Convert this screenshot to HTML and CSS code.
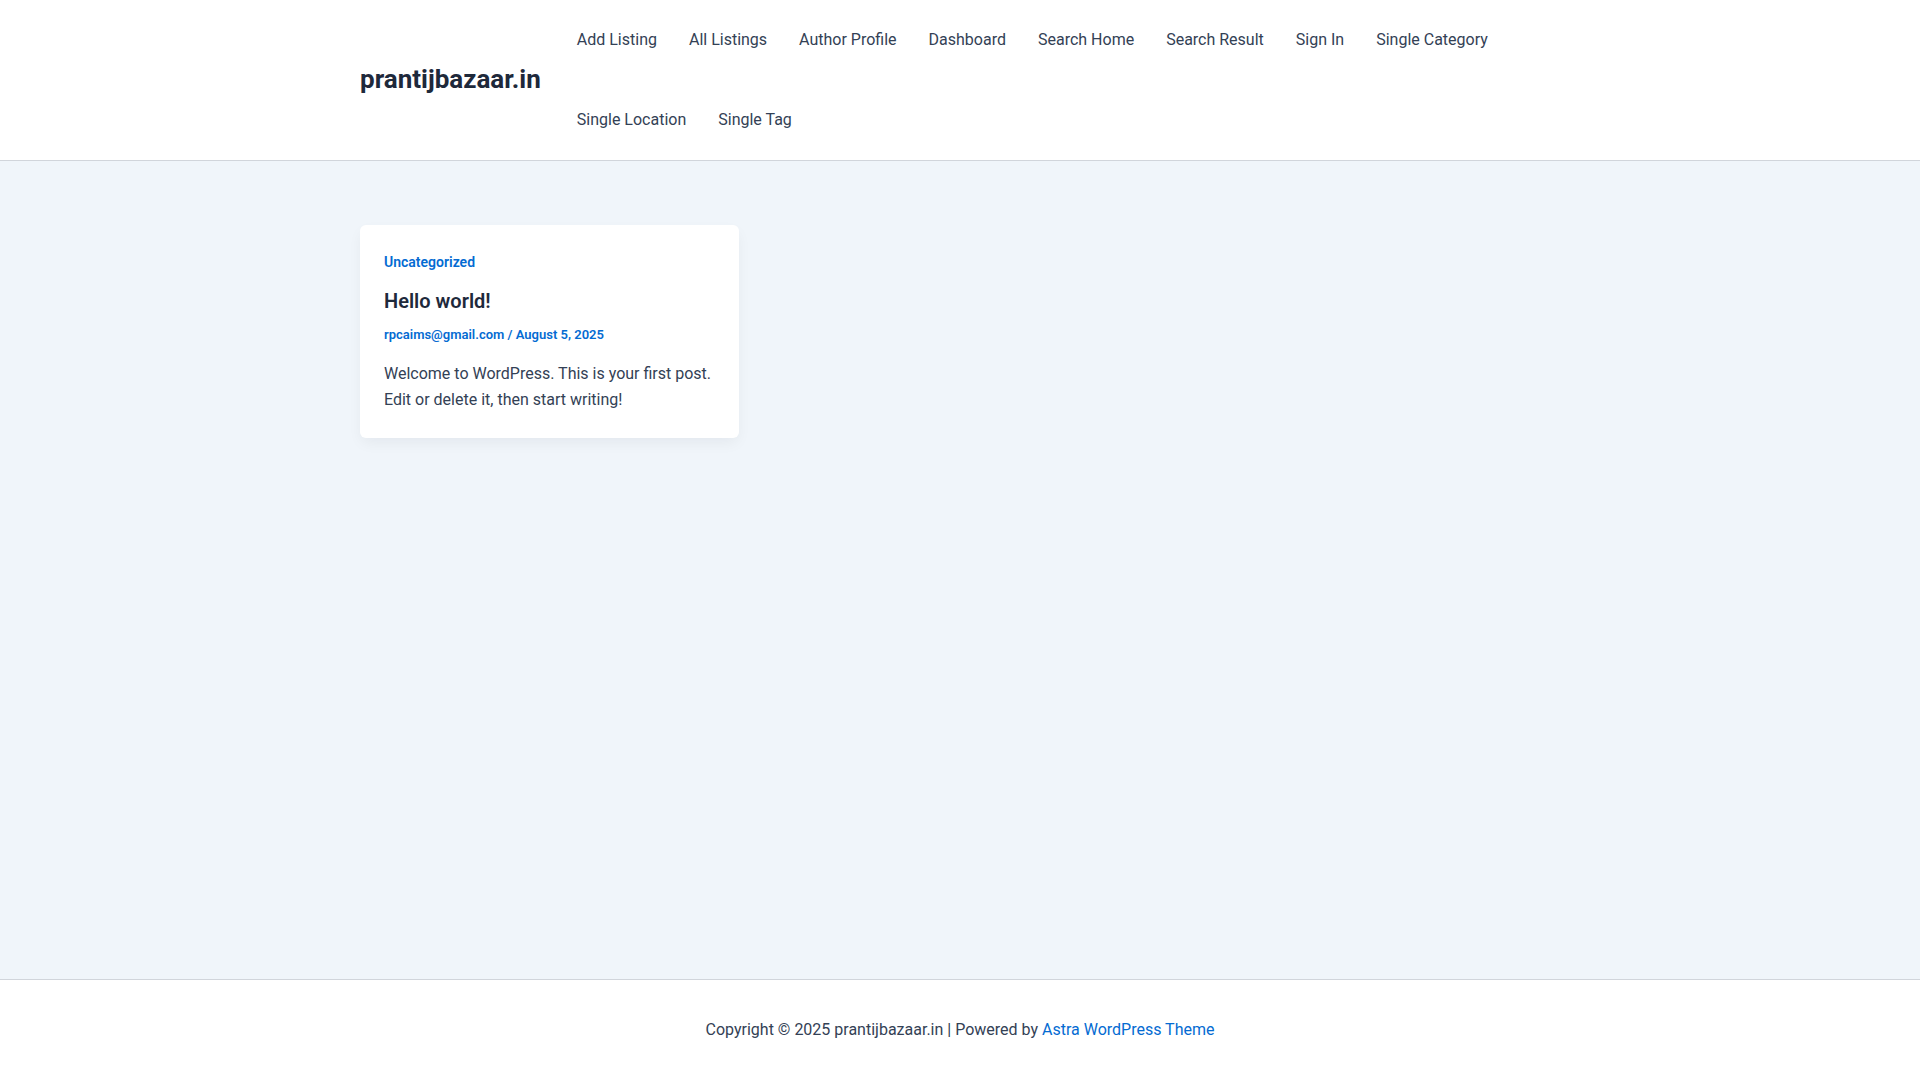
FILE: index.html
```html
<!DOCTYPE html>
<html lang="en">
<head>
  <meta charset="UTF-8" />
  <meta name="viewport" content="width=device-width, initial-scale=1.0"/>
  <title>prantijbazaar.in</title>
  <link rel="stylesheet" href="styles.css">
</head>
<body>
  <header class="site-header">
    <div class="container header-inner">
      <a class="site-title" href="#">prantijbazaar.in</a>
      <nav class="main-nav">
        <ul class="menu">
          <li><a href="#">Add Listing</a></li>
          <li><a href="#">All Listings</a></li>
          <li><a href="#">Author Profile</a></li>
          <li><a href="#">Dashboard</a></li>
          <li><a href="#">Search Home</a></li>
          <li><a href="#">Search Result</a></li>
          <li><a href="#">Sign In</a></li>
          <li><a href="#">Single Category</a></li>
          <li><a href="#">Single Location</a></li>
          <li><a href="#">Single Tag</a></li>
        </ul>
      </nav>
    </div>
  </header>

  <main class="site-content">
    <div class="container post-grid">
      <article class="post-card">
        <a class="post-cat" href="#">Uncategorized</a>
        <h2 class="post-title"><a href="#">Hello world!</a></h2>
        <div class="post-meta"><a href="#">rpcaims@gmail.com</a> / <a href="#">August 5, 2025</a></div>
        <p class="post-excerpt">Welcome to WordPress. This is your first post. Edit or delete it, then start writing!</p>
      </article>
    </div>
  </main>

  <footer class="site-footer">
    <div class="footer-copy">Copyright &copy; 2025 prantijbazaar.in | Powered by <a href="#">Astra WordPress Theme</a></div>
  </footer>
</body>
</html>
```

FILE: styles.css
```css
:root {
  --heading-color: #1e293b;
  --text-color: #334155;
  --link-color: #046bd2;
  --bg-color: #f0f5fa;
  --border-color: #d1d5db;
}

* {
  box-sizing: border-box;
}

body {
  margin: 0;
  font-family: Roboto, "Liberation Sans", sans-serif;
  font-size: 16px;
  color: var(--text-color);
  background-color: var(--bg-color);
  display: flex;
  flex-direction: column;
  min-height: 100vh;
}

a {
  text-decoration: none;
}

.container {
  width: 1200px;
  margin: 0 auto;
}

.site-header {
  background: #fff;
  border-bottom: 1px solid var(--border-color);
}

.header-inner {
  display: flex;
  align-items: center;
  gap: 20px;
  min-height: 160px;
}

.site-title {
  font-size: 26px;
  font-weight: 700;
  color: var(--heading-color);
  white-space: nowrap;
  margin-top: -2px;
}

.main-nav {
  flex: 1;
  align-self: flex-start;
}

.menu {
  list-style: none;
  margin: 0;
  padding: 0;
  display: flex;
  flex-wrap: wrap;
}

.menu li a {
  display: flex;
  align-items: center;
  height: 79px;
  padding: 0 16px;
  color: var(--text-color);
  line-height: 1;
}

.menu li:nth-child(n+9) a {
  height: 81px;
}

.site-content {
  flex: 1;
  padding-top: 64px;
}

.post-grid {
  display: grid;
  grid-template-columns: repeat(3, 1fr);
  gap: 32px;
  align-items: start;
}

.post-card {
  background: #fff;
  border-radius: 6px;
  padding: 24px 24px 25px;
  box-shadow: 0 6px 15px -2px rgba(16, 24, 40, 0.06);
}

.post-cat {
  display: block;
  font-size: 14px;
  font-weight: 600;
  line-height: 26px;
  color: var(--link-color);
}

.post-title {
  margin: 13px 0 0;
  font-size: 20px;
  font-weight: 600;
  line-height: 26px;
}

.post-title a {
  color: var(--heading-color);
}

.post-meta {
  margin-top: 10px;
  font-size: 13px;
  font-weight: 600;
  line-height: 21px;
  color: var(--link-color);
}

.post-meta a {
  color: var(--link-color);
}

.post-excerpt {
  margin: 16px 0 0;
  line-height: 26px;
}

.site-footer {
  background: #fff;
  border-top: 1px solid var(--border-color);
  min-height: 101px;
  display: flex;
  align-items: center;
  justify-content: center;
}

.footer-copy {
  line-height: 24px;
}

.footer-copy a {
  color: var(--link-color);
}
```
